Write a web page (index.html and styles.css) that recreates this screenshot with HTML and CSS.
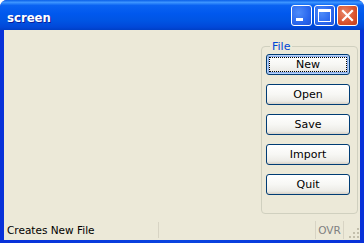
FILE: index.html
```html
<!DOCTYPE html>
<html lang="en">
<head>
    <meta charset="UTF-8"/>
    <title>screen</title>
    <link rel="stylesheet" href="styles.css">
</head>
<body>
<div class="window">
    <div class="titlebar">
        <span class="title">screen</span>
        <div class="controls">
            <div class="ctl ctl-min"><span class="min-bar"></span></div>
            <div class="ctl ctl-max"><span class="max-box"></span></div>
            <div class="ctl ctl-close">
                <svg width="13" height="13" viewBox="0 0 13 13">
                    <path d="M2 2 L11 11 M11 2 L2 11" stroke="#fff" stroke-width="2.2" stroke-linecap="square"/>
                </svg>
            </div>
        </div>
    </div>
    <div class="client">
        <div class="main">
            <div class="canvas"></div>
            <fieldset class="group">
                <legend>File</legend>
                <button class="btn focused">New</button>
                <button class="btn">Open</button>
                <button class="btn">Save</button>
                <button class="btn">Import</button>
                <button class="btn">Quit</button>
            </fieldset>
        </div>
        <div class="statusbar">
            <div class="status-msg">Creates New File</div>
            <div class="status-cell"></div>
            <div class="status-ovr">OVR</div>
            <div class="grip">
                <svg width="12" height="12" viewBox="0 0 12 12">
                    <g fill="#c3bfac">
                        <rect x="9" y="1" width="2" height="2"/>
                        <rect x="5" y="5" width="2" height="2"/>
                        <rect x="9" y="5" width="2" height="2"/>
                        <rect x="1" y="9" width="2" height="2"/>
                        <rect x="5" y="9" width="2" height="2"/>
                        <rect x="9" y="9" width="2" height="2"/>
                    </g>
                </svg>
            </div>
        </div>
    </div>
</div>
</body>
</html>
```

FILE: styles.css
```css
* {
    margin: 0;
    padding: 0;
    box-sizing: border-box;
}

html, body {
    width: 364px;
    height: 243px;
    overflow: hidden;
    background: #ffffff;
}

.window {
    width: 364px;
    height: 243px;
    display: flex;
    flex-direction: column;
    background: linear-gradient(to right, #0831d9, #0a45e0 50%, #0831d9);
    border-radius: 7px 7px 0 0;
    padding: 0 4px 3px 4px;
    font-family: "DejaVu Sans", Tahoma, sans-serif;
}

.titlebar {
    height: 30px;
    margin: 0 -4px;
    padding: 0 6px 0 7px;
    display: flex;
    align-items: center;
    border-radius: 7px 7px 0 0;
    background: linear-gradient(to bottom, #0a5fe8 0%, #3d95ff 8%, #0a63f2 18%, #0058ee 45%, #0054e3 70%, #0148d9 90%, #003fc6 100%);
}

.title {
    flex: 1;
    color: #ffffff;
    font-family: "DejaVu Sans Condensed", "DejaVu Sans", sans-serif;
    font-weight: bold;
    font-size: 13px;
    text-shadow: 1px 1px 0 #0a1e9c;
    padding-top: 4px;
}

.controls {
    display: flex;
    gap: 2px;
    padding-top: 1px;
}

.ctl {
    width: 21px;
    height: 21px;
    border: 1px solid #ffffff;
    border-radius: 3px;
    display: flex;
    align-items: center;
    justify-content: center;
    background: radial-gradient(circle at 35% 35%, #4f8cf9 0%, #2a67ee 60%, #1d52d8 100%);
}

.ctl-close {
    background: radial-gradient(circle at 35% 35%, #e8876a 0%, #d9512c 60%, #c2401e 100%);
}

.min-bar {
    width: 7px;
    height: 3px;
    background: #ffffff;
    margin-top: 8px;
    margin-right: 4px;
}

.max-box {
    width: 13px;
    height: 13px;
    border: 1px solid #ffffff;
    border-top-width: 3px;
}

.client {
    flex: 1;
    display: flex;
    flex-direction: column;
    background: #ece9d8;
}

.main {
    flex: 1;
    display: flex;
    padding: 10px 2px 6px 0;
}

.canvas {
    flex: 1;
}

.group {
    width: 97px;
    border: 1px solid #d0d0bf;
    border-radius: 4px;
    padding: 1px 7px 0 4px;
    display: flex;
    flex-direction: column;
    gap: 9px;
}

.group legend {
    color: #0046d5;
    font-size: 11px;
    padding: 0 2px;
    margin-left: 4px;
}

.btn {
    height: 21px;
    width: 84px;
    border: 1px solid #003c74;
    border-radius: 3px;
    background: linear-gradient(to bottom, #ffffff 0%, #f7f7f4 50%, #ecebe6 85%, #d6d0c5 100%);
    font-family: "DejaVu Sans", Tahoma, sans-serif;
    font-size: 11px;
    color: #000000;
    outline: none;
}

.btn.focused {
    box-shadow: inset 0 0 0 1px #b8d2f8, inset 0 0 0 2px #89adea;
    outline: 1px dotted #000;
    outline-offset: -4px;
}

.statusbar {
    height: 20px;
    display: flex;
    align-items: center;
    font-size: 10.5px;
    color: #000;
}

.status-msg {
    width: 155px;
    padding-left: 3px;
    border-right: 1px solid #d8d4c4;
    height: 16px;
    line-height: 16px;
}

.status-cell {
    flex: 1;
}

.status-ovr {
    width: 29px;
    height: 18px;
    line-height: 18px;
    text-align: center;
    color: #808080;
    border-left: 1px solid #d8d4c4;
    border-right: 1px solid #d8d4c4;
}

.grip {
    width: 16px;
    height: 18px;
    display: flex;
    align-items: flex-end;
    justify-content: flex-end;
}
```
